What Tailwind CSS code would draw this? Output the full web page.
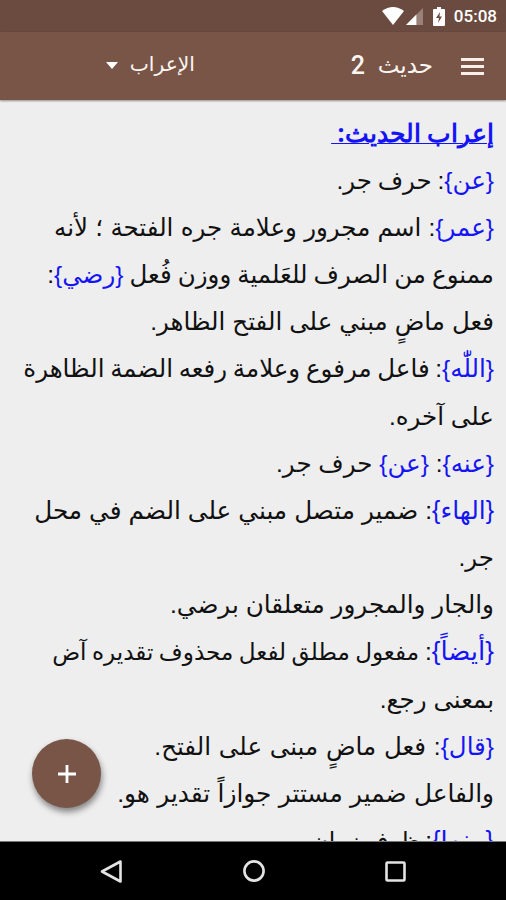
<!DOCTYPE html>
<html lang="ar">
<head>
  <meta charset="UTF-8" />
  <title>إعراب الحديث</title>
  <meta name="viewport" content="width=device-width, initial-scale=1" />
  <script src="https://cdn.jsdelivr.net/npm/@tailwindcss/browser@4"></script>
</head>
<body class="relative flex h-[900px] w-[506px] flex-col overflow-hidden bg-[#eeeeee] font-['Liberation_Sans','DejaVu_Sans',sans-serif]">
  <!-- status bar -->
  <div class="flex h-8 shrink-0 items-center justify-end bg-[#6b4b40] pr-[9px] font-[Roboto,sans-serif] text-white">
    <svg class="h-[18px] w-[22px]" viewBox="0 0 22 18" fill="#fff"><path d="M0 4Q11-4 22 4L11 18Z" /></svg>
    <svg class="ml-0.5 h-[17px] w-[17px]" viewBox="0 0 18 18"><path d="M18 0V18H0Z" fill="#9a827a" /><path d="M11 7V18H0Z" fill="#fff" /></svg>
    <svg class="ml-2.5 h-[19px] w-3" viewBox="0 0 12 19"><path d="M4 0H8V2H11Q12 2 12 3V18Q12 19 11 19H1Q0 19 0 18V3Q0 2 1 2H4Z" fill="#fff" /><path d="M7 5L3 11H6L5 16L9 9.500H6.500Z" fill="#6b4b40" /></svg>
    <span class="ml-[9px] text-[17px] font-medium leading-8">05:08</span>
  </div>

  <!-- toolbar -->
  <header dir="rtl" class="z-10 flex h-[68px] shrink-0 items-center bg-[#795548] pr-[22px] text-[#fdf6f2] shadow-[0_1px_2px_rgba(0,0,0,0.4)]">
    <svg class="h-[17px] w-[23px]" viewBox="0 0 23 17" fill="#f8eeea"><path d="M0 0H23V3H0ZM0 7H23V10H0ZM0 14H23V17H0Z" /></svg>
    <span class="mr-7 w-[55px] text-[23px] leading-8 -mt-0.5 whitespace-nowrap">حديث</span>
    <span class="mr-[13px] w-[15px] font-[Roboto] text-[25px] font-medium">2</span>
    <span class="mr-[155px] w-[65px] text-[20.3px] leading-8 -mt-1 whitespace-nowrap">الإعراب</span>
    <svg class="mr-3 mb-0.5 h-[7px] w-3" viewBox="0 0 12 7" fill="#fff"><path d="M0 0H12L6 7Z" /></svg>
  </header>

  <main dir="rtl" class="min-h-0 flex-1 overflow-hidden pt-[10px] pr-3 text-[24.5px] leading-[47.1px] whitespace-nowrap text-[#111]">
    <p class="-mt-px h-[48.1px] font-['Noto_Sans',Roboto,sans-serif] text-[24.9px] font-bold text-[#1414f5] underline decoration-1">إعراب الحديث:&nbsp;</p>
    <p class="[word-spacing:-1px]"><span class="text-[#1414f5]">{عن}</span>: حرف جر.</p>
    <p class="[word-spacing:0.5px]"><span class="text-[#1414f5]">{عمر}</span>: اسم مجرور وعلامة جره الفتحة ؛ لأنه</p>
    <p class="[word-spacing:-0.7px]">ممنوع من الصرف للعَلمية ووزن فُعل <span class="text-[#1414f5]">{رضي}</span>:</p>
    <p class="[word-spacing:0.2px]">فعل ماضٍ مبني على الفتح الظاهر.</p>
    <p class="[word-spacing:-1.1px]"><span class="text-[#1414f5]">{اللّٰه}</span>: فاعل مرفوع وعلامة رفعه الضمة الظاهرة</p>
    <p>على آخره.</p>
    <p><span class="text-[#1414f5]">{عنه}</span>: <span class="text-[#1414f5]">{عن}</span> حرف جر.</p>
    <p class="[word-spacing:0.2px]"><span class="text-[24.9px] text-[#1414f5]">{الهاء}</span>: <span class="text-[24.7px]">ضمير متصل مبني على الضم في محل</span></p>
    <p>جر.</p>
    <p class="text-[24.7px]">والجار والمجرور متعلقان برضي.</p>
    <p class="[word-spacing:-1px]"><span class="text-[26px] text-[#1414f5]">{أيضاً}</span>: <span class="text-[23.1px]">مفعول مطلق لفعل محذوف تقديره آض</span></p>
    <p>بمعنى رجع.</p>
    <p class="[word-spacing:1px]"><span class="text-[#1414f5]">{قال}</span>: فعل ماضٍ مبنى على الفتح.</p>
    <p class="text-[24.8px] [word-spacing:0.4px]">والفاعل ضمير مستتر جوازاً تقدير هو.</p>
    <p class="[word-spacing:-2px]"><span class="text-[25.5px] text-[#1414f5]">{بينما}</span>: <span class="text-[23.5px]">ظرف زمان.</span></p>
  </main>

  <!-- floating action button -->
  <button class="absolute bottom-[92px] left-8 flex size-[69px] items-center justify-center rounded-full bg-[#795548] shadow-[1px_4px_6px_rgba(0,0,0,0.45)]">
    <svg class="size-[18px]" viewBox="0 0 18 18" stroke="#fff" stroke-width="2.8"><path d="M9 0V18M0 9H18" /></svg>
  </button>

  <!-- navigation bar -->
  <nav class="z-10 flex h-[58px] shrink-0 items-center justify-between bg-black pr-[100px] pl-[100px] shadow-[0_-1px_0_#777]">
    <svg class="h-[23px] w-[22px]" viewBox="0 0 22 23" fill="none" stroke="#e4e4e4" stroke-width="2.6" stroke-linejoin="round"><path d="M20.500 1.500V21.500L2 11.500Z" /></svg>
    <svg class="size-[22px]" viewBox="0 0 22 22" fill="none" stroke="#e4e4e4" stroke-width="2.6"><circle cx="11" cy="11" r="9.600" /></svg>
    <svg class="size-[21px]" viewBox="0 0 21 21" fill="none" stroke="#e4e4e4" stroke-width="2.6"><rect x="1.500" y="1.500" width="18" height="18" rx="1" /></svg>
  </nav>
</body>
</html>
